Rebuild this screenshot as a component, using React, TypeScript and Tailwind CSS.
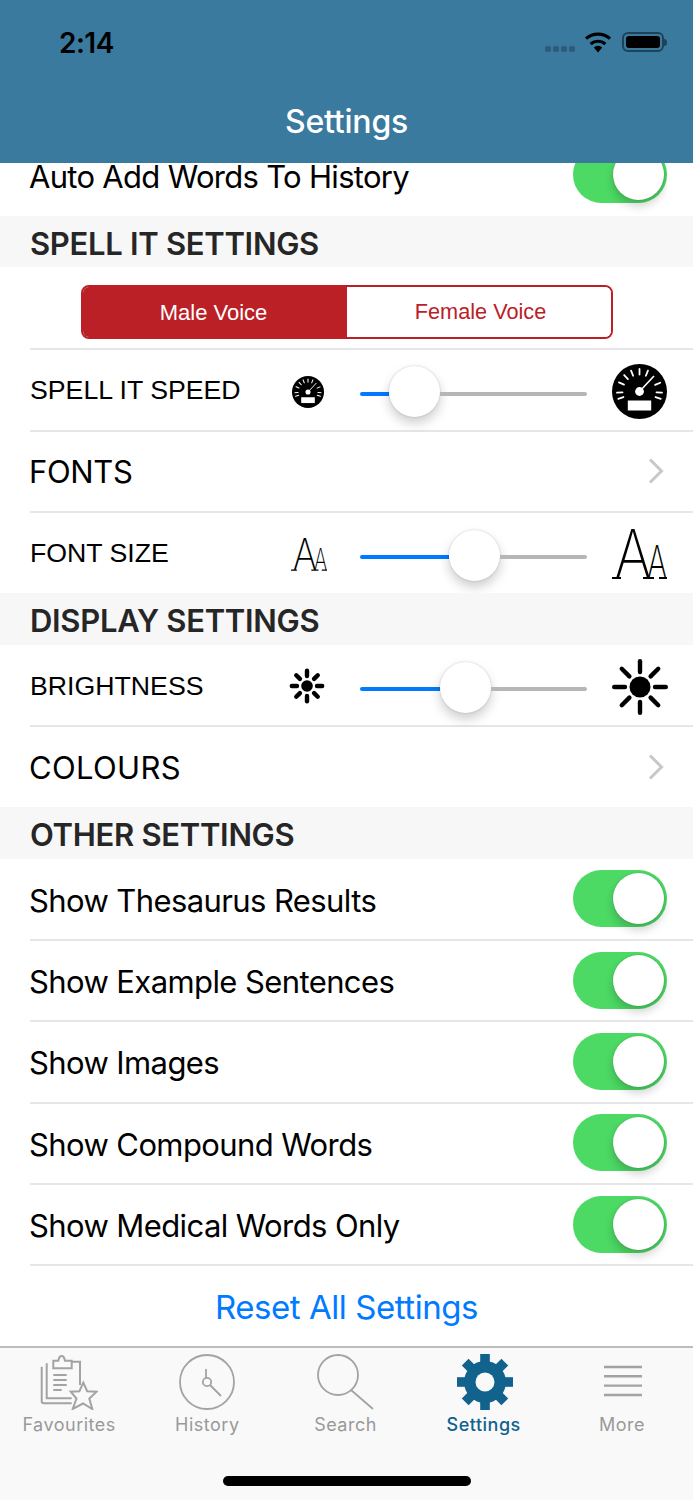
import React from 'react';

const sans = "font-['Liberation_Sans',Arial,sans-serif]";
const inter = "font-['Inter',sans-serif]";
const rowText = `${inter} text-[31px] leading-[26px] text-black flex-1 -ml-[1px]`;

const Toggle: React.FC = () => (
  <div className="w-[94px] h-[57px] rounded-full bg-[#4cd964] flex items-center justify-end pr-[3px] flex-none">
    <div className="w-[51px] h-[51px] rounded-full bg-white shadow-[0_6px_10px_rgba(0,0,0,0.18),0_0_2px_rgba(0,0,0,0.2)]" />
  </div>
);

const Chevron: React.FC = () => (
  <svg width="18" height="28" viewBox="0 0 18 28" className="flex-none mr-[28px]">
    <path d="M3 2.5 L14.5 14 L3 25.5" fill="none" stroke="#c7c7cc" strokeWidth="3" />
  </svg>
);

// the divider sits on the seam between rows, so the inner box runs 1px past the row
const Row: React.FC<{ children: React.ReactNode; border?: boolean }> = ({ children, border = true }) => (
  <div className="h-[81.33px] pl-[30px]">
    <div className={`flex items-center ${border ? 'h-[82.33px] border-b-2 border-[#e6e6e6]' : 'h-full'}`}>{children}</div>
  </div>
);

const ToggleRow: React.FC<{ label: string }> = ({ label }) => (
  <Row>
    <span className={`${rowText} mt-[4px] tracking-[-0.6px]`}>{label}</span>
    <div className="mr-[26px]">
      <Toggle />
    </div>
  </Row>
);

const LinkRow: React.FC<{ label: string; border?: boolean; spacing: string }> = ({ label, border, spacing }) => (
  <Row border={border}>
    <span className={`${rowText} mt-[3px] ${spacing}`}>{label}</span>
    <Chevron />
  </Row>
);

const Section: React.FC<{ title: string }> = ({ title }) => (
  <div className="h-[51.33px] bg-[#f7f7f7] pl-[30px] pt-[4px] flex items-center">
    <span className={`${inter} text-[31px] leading-[36px] font-semibold text-[#262626] tracking-[-0.3px]`}>{title}</span>
  </div>
);

const Slider: React.FC<{ fill: string }> = ({ fill }) => (
  <div className="w-[227px] flex items-center flex-none mt-[5px]">
    <div className={`${fill} h-[4px] bg-[#007aff] rounded-l-full mt-1 flex-none`} />
    <div className="w-[51px] h-[51px] rounded-full bg-white flex-none shadow-[0_6px_12px_rgba(0,0,0,0.2),0_0_2px_rgba(0,0,0,0.2)]" />
    <div className="flex-1 h-[4px] bg-[#b6b6b6] rounded-r-full mt-1" />
  </div>
);

const Gauge: React.FC<{ size: number }> = ({ size }) => {
  const angles = [-109, -93, -66, -43, -22, 0, 22, 67, 93, 109];
  return (
    <svg width={size} height={size} viewBox="-27.5 -27.5 55 55">
      <circle r="27.5" fill="#000" />
      {angles.map((a) => (
        <line
          key={a}
          x1="0"
          y1="-17"
          x2="0"
          y2="-22.5"
          stroke="#fff"
          strokeWidth="1.8"
          strokeLinecap="round"
          transform={`rotate(${a})`}
        />
      ))}
      <line x1="0" y1="0" x2="14.5" y2="-15.5" stroke="#fff" strokeWidth="1.6" />
      <circle r="4.4" fill="#fff" />
      <rect x="-11.7" y="9" width="23.4" height="10" fill="#fff" />
    </svg>
  );
};

const Sun: React.FC<{ size: number; core: number; from: number; to: number; sw: number }> = ({ size, core, from, to, sw }) => (
  <svg width={size} height={size} viewBox={`${-size / 2} ${-size / 2} ${size} ${size}`}>
    <circle r={core} fill="#000" />
    {[0, 45, 90, 135, 180, 225, 270, 315].map((a) => (
      <line
        key={a}
        x1="0"
        y1={-from}
        x2="0"
        y2={-to}
        stroke="#000"
        strokeWidth={sw}
        strokeLinecap="round"
        transform={`rotate(${a})`}
      />
    ))}
  </svg>
);

// the Aa mark stays live text in a hairline weight, only the little feet are drawn
const FontMark: React.FC<{ w: number; h: number }> = ({ w, h }) => (
  <svg width={w} height={h} viewBox="0 0 55 50" fontFamily="Inter, sans-serif" fontWeight="200" className="overflow-visible">
    <text transform="translate(2.6 49) scale(0.84 1)" fontSize="67" fill="#000">
      A
    </text>
    <text transform="translate(35 49) scale(0.68 1)" fontSize="45" fill="#000">
      A
    </text>
    <path d="M0 49 H9 M31 49 H42 M47 49 H55" stroke="#000" strokeWidth="1.8" fill="none" />
  </svg>
);

const StatusIcons: React.FC = () => (
  <div className="flex items-center">
    <div className="flex gap-[2px] mt-[14px] mr-[9px]">
      {[0, 1, 2, 3].map((i) => (
        <div key={i} className="w-[6px] h-[6px] rounded-[2px] bg-[#2c5c7a]" />
      ))}
    </div>
    <svg width="28" height="22" viewBox="0 0 28 22" className="mr-[10px]">
      <path d="M14 21.5 L9.8 16.6 A6.6 6.6 0 0 1 18.2 16.6 Z" fill="#000" />
      <path d="M6.6 12.9 A11.6 11.6 0 0 1 21.4 12.9" fill="none" stroke="#000" strokeWidth="3.2" />
      <path d="M2 7.6 A18.4 18.4 0 0 1 26 7.6" fill="none" stroke="#000" strokeWidth="3.2" />
    </svg>
    <div className="w-[42px] h-[20px] rounded-[6px] border-2 border-[#1f4258] p-[2px]">
      <div className="w-full h-full rounded-[3px] bg-black" />
    </div>
    <div className="w-[3px] h-[7px] rounded-r-full bg-[#1f4258]" />
  </div>
);

const tabColor = '#a3a3a3';

const FavouritesIcon: React.FC = () => (
  <svg width="58" height="56" viewBox="0 0 58 56" fill="none" stroke={tabColor} strokeWidth="2">
    <path d="M1.7 12.7 V47 Q1.7 49.3 4 49.3 H31.7" />
    <path d="M6.7 9.3 V44.3 H31.7" />
    <path d="M31.7 7.7 H40 V31" />
    <path d="M13.3 14.3 V6.7 H18.3 C19.5 0.5 23.8 0.5 25 6.7 H31.7 V14.3 Z" fill="#f9f9f9" />
    <path d="M13.3 21 H26.7 M13.3 26 H26.7 M13.3 31 H26.7 M13.3 36 H21.7" />
    <path
      d="M43.3 28.7 L47.2 37.2 L56.7 37.7 L49.3 44.5 L52.3 55 L43 49.5 L32.7 55 L36.5 44.5 L30.7 37.7 L39.4 37.2 Z"
      fill="#f9f9f9"
    />
  </svg>
);

const HistoryIcon: React.FC = () => (
  <svg width="56" height="56" viewBox="0 0 56 56" fill="none" stroke={tabColor} strokeWidth="1.8">
    <circle cx="28" cy="28" r="27" />
    <circle cx="28" cy="28" r="4.2" />
    <path d="M27 15 V24 M31 31 L42 42" />
  </svg>
);

const SearchIcon: React.FC = () => (
  <svg width="58" height="56" viewBox="0 0 58 56" fill="none" stroke={tabColor} strokeWidth="1.8">
    <circle cx="22" cy="21" r="20" />
    <path d="M35 36 L57 55" />
  </svg>
);

const GearIcon: React.FC = () => (
  <svg width="56" height="56" viewBox="-28 -28 56 56" className="ml-[2px]">
    <g fill="#11628c">
      {[0, 45, 90, 135].map((a) => (
        <rect key={a} x="-4.8" y="-28" width="9.6" height="56" transform={`rotate(${a})`} />
      ))}
      <circle r="21" />
    </g>
    <circle r="9.5" fill="#f9f9f9" />
  </svg>
);

const MoreIcon: React.FC = () => (
  <svg width="40" height="56" viewBox="0 0 40 56" stroke={tabColor} strokeWidth="2.4" className="ml-[2px]">
    <path d="M1 13 H39 M1 22.3 H39 M1 31.6 H39 M1 41 H39" />
  </svg>
);

const Tab: React.FC<{ label: string; active?: boolean; children: React.ReactNode }> = ({ label, active, children }) => (
  <div className="flex flex-col items-center">
    <div className="h-[56px] flex items-center justify-center">{children}</div>
    <span
      className={`${inter} text-[18px] leading-[22px] mt-[4px] tracking-[0.5px] ${active ? 'text-[#11628c] font-medium' : 'text-[#999999]'}`}
    >
      {label}
    </span>
  </div>
);

export default function App() {
  return (
    <div className="w-[693px] h-[1500px] overflow-hidden bg-white flex flex-col">
      <div className="h-[163px] bg-[#397a9e] flex-none">
        <div className="h-[100px] flex items-start justify-between pt-[27px] pl-[59px] pr-[26px]">
          <span className={`${inter} text-[28px] leading-[32px] font-semibold text-black tracking-[-0.5px]`}>2:14</span>
          <div className="mt-[4px]">
            <StatusIcons />
          </div>
        </div>
        <div className="flex justify-center">
          <span className={`${inter} text-[32px] leading-[44px] font-medium text-white tracking-[-0.2px]`}>Settings</span>
        </div>
      </div>

      <div className="h-[53px] pl-[30px] flex items-start flex-none">
        <span className={`${rowText} tracking-[-0.7px] mt-[1px]`}>Auto Add Words To History</span>
        <div className="h-full overflow-hidden flex items-end pb-[13px] mr-[26px]">
          <Toggle />
        </div>
      </div>

      <Section title="SPELL IT SETTINGS" />
      <div className="h-[82px] pl-[30px]">
        <div className="h-[83px] border-b-2 border-[#e6e6e6] pl-[51px] pt-[18px]">
          <div className="w-[532px] h-[54px] rounded-[8px] border-2 border-[#bb2026] flex overflow-hidden">
            <div className={`${sans} w-[264px] pr-[3px] bg-[#bb2026] text-white text-[22px] flex items-center justify-center`}>
              Male Voice
            </div>
            <div className={`${sans} flex-1 pl-[3px] bg-white text-[#bb2026] text-[21.7px] flex items-center justify-center`}>
              Female Voice
            </div>
          </div>
        </div>
      </div>

      <Row>
        <span className={`${sans} text-[26.7px] leading-[30px] mt-[2px] text-black w-[262px] flex-none`}>SPELL IT SPEED</span>
        <div className="w-[32px] flex-none mt-[5px] mr-[36px]">
          <Gauge size={32} />
        </div>
        <Slider fill="w-[29px]" />
        <div className="ml-[25px] mt-[5px]">
          <Gauge size={55} />
        </div>
      </Row>
      <LinkRow label="FONTS" spacing="tracking-[-0.35px]" />
      <Row border={false}>
        <span className={`${sans} text-[26.7px] leading-[30px] text-black w-[261px] flex-none`}>FONT SIZE</span>
        <div className="w-[36px] flex-none mr-[33px] mt-[3px]">
          <FontMark w={36} h={33} />
        </div>
        <Slider fill="w-[89px]" />
        <div className="ml-[25px] mt-[2px]">
          <FontMark w={55} h={50} />
        </div>
      </Row>

      <Section title="DISPLAY SETTINGS" />
      <Row>
        <span className={`${sans} text-[26.7px] leading-[30px] mt-[2px] text-black w-[259px] flex-none`}>BRIGHTNESS</span>
        <div className="w-[36px] flex-none mr-[35px] mt-[3px]">
          <Sun size={36} core={5.8} from={10} to={15.2} sw={4.4} />
        </div>
        <Slider fill="w-[80px]" />
        <div className="ml-[25px] mt-[5px]">
          <Sun size={56} core={10.5} from={15} to={25.8} sw={4.4} />
        </div>
      </Row>
      <LinkRow label="COLOURS" border={false} spacing="tracking-[0.35px]" />

      <Section title="OTHER SETTINGS" />
      <ToggleRow label="Show Thesaurus Results" />
      <ToggleRow label="Show Example Sentences" />
      <ToggleRow label="Show Images" />
      <ToggleRow label="Show Compound Words" />
      <ToggleRow label="Show Medical Words Only" />
      <div className="h-[81px] flex items-center justify-center flex-none pt-[4px]">
        <span className={`${inter} text-[33px] tracking-[-0.45px] text-[#007aff]`}>Reset All Settings</span>
      </div>

      <div className="flex-1 bg-[#f9f9f9] border-t-2 border-[#bdbdbd] flex flex-col">
        <div className="w-[691px] grid grid-cols-5 pt-[6px]">
          <Tab label="Favourites">
            <FavouritesIcon />
          </Tab>
          <Tab label="History">
            <HistoryIcon />
          </Tab>
          <Tab label="Search">
            <SearchIcon />
          </Tab>
          <Tab label="Settings" active>
            <GearIcon />
          </Tab>
          <Tab label="More">
            <MoreIcon />
          </Tab>
        </div>
        <div className="flex justify-center mt-[40px]">
          <div className="w-[248px] h-[10px] rounded-full bg-black" />
        </div>
      </div>
    </div>
  );
}
